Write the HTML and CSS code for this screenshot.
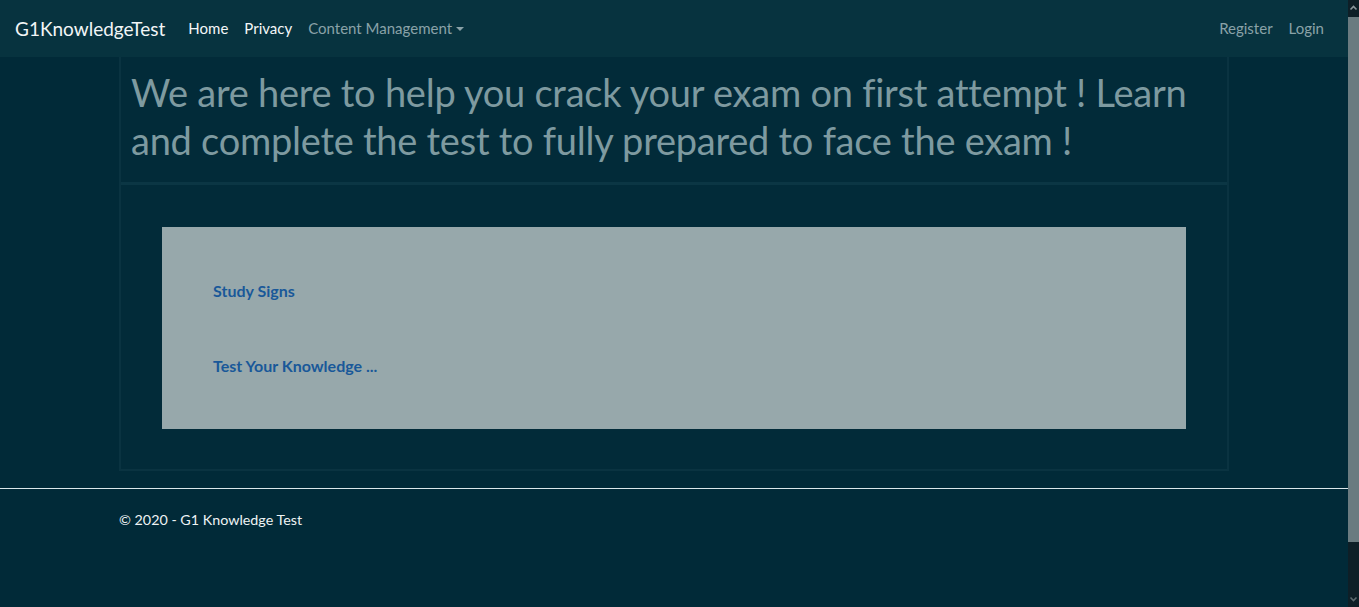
FILE: index.html
```html
<!DOCTYPE html>
<html lang="en">
<head>
<meta charset="utf-8">
<title>G1KnowledgeTest</title>
<link rel="stylesheet" href="styles.css">
</head>
<body>
<div class="page">
  <header class="navbar">
    <a class="brand" href="#">G1KnowledgeTest</a>
    <nav class="nav-left">
      <a class="nav-link active" href="#">Home</a>
      <a class="nav-link active" href="#">Privacy</a>
      <a class="nav-link muted dropdown" href="#">Content Management<span class="caret"></span></a>
    </nav>
    <nav class="nav-right">
      <a class="nav-link muted" href="#">Register</a>
      <a class="nav-link muted" href="#">Login</a>
    </nav>
  </header>
  <div class="container">
    <main class="main-box">
      <section class="hero">
        <h1 class="hero-title">We are here to help you crack your exam on first attempt ! Learn and complete the test to fully prepared to face the exam !</h1>
      </section>
      <section class="content">
        <div class="card">
          <a class="card-link" href="#">Study Signs</a>
          <a class="card-link" href="#">Test Your Knowledge ...</a>
        </div>
      </section>
    </main>
  </div>
  <footer class="footer">
    <div class="container footer-inner">© 2020 - G1 Knowledge Test</div>
  </footer>
</div>
<div class="scrollbar" aria-hidden="true">
  <div class="sb-arrow">
    <svg width="11" height="17" viewBox="0 0 11 17"><path d="M2.5 9.5 L5.5 6.5 L8.5 9.5" fill="none" stroke="#8a979c" stroke-width="1.6"/></svg>
  </div>
  <div class="sb-thumb"></div>
  <div class="sb-track"></div>
  <div class="sb-arrow">
    <svg width="11" height="17" viewBox="0 0 11 17"><path d="M2.5 7.5 L5.5 10.5 L8.5 7.5" fill="none" stroke="#5d6b70" stroke-width="1.6"/></svg>
  </div>
</div>
</body>
</html>
```
FILE: styles.css
```css
html {
  background: #012a38;
}
body {
  margin: 0;
  height: 607px;
  overflow: hidden;
  display: flex;
  background: #012a38;
  font-family: "Lato", "Open Sans", sans-serif;
  font-size: 16px;
  color: #e6eef0;
}
.page {
  flex: 1;
  min-width: 0;
}
a {
  text-decoration: none;
}
.navbar {
  display: flex;
  align-items: center;
  height: 57px;
  padding: 0 16px 1px 15px;
  box-sizing: border-box;
  background: #07333f;
}
.brand {
  font-size: 19px;
  color: #f2f6f7;
  margin-right: 15px;
}
.nav-left, .nav-right {
  display: flex;
  align-items: center;
}
.nav-right {
  margin-left: auto;
}
.nav-link {
  padding: 8px;
  font-size: 15px;
}
.nav-link.active {
  color: #f4f7f8;
}
.nav-link.muted {
  color: #8aa2a8;
}
.caret {
  display: inline-block;
  margin-left: 4px;
  vertical-align: 3px;
  border-top: 4px solid #8aa2a8;
  border-left: 4px solid transparent;
  border-right: 4px solid transparent;
}
.container {
  width: 1110px;
  margin: 0 auto;
}
.main-box {
  border: 2px solid #0a3341;
  border-top: none;
  background: #022b39;
}
.hero {
  padding: 11px 10px 18px;
  border-bottom: 3px solid #0b3644;
}
.hero-title {
  margin: 0;
  font-size: 38px;
  letter-spacing: -0.25px;
  font-weight: 400;
  line-height: 48px;
  color: #7e9aa0;
}
.content {
  padding: 42px 41px 40px 41px;
}
.card {
  display: flex;
  flex-direction: column;
  align-items: flex-start;
  gap: 55px;
  padding: 54px 51px 53px;
  background: #97a8ab;
}
.card-link {
  font-size: 16px;
  font-weight: 700;
  line-height: 20px;
  color: #195899;
}
.footer {
  margin-top: 17px;
  border-top: 1px solid #dbe7ea;
}
.footer-inner {
  line-height: 61px;
  font-size: 14.3px;
  color: #eef3f4;
}
.scrollbar {
  width: 11px;
  height: 607px;
  display: flex;
  flex-direction: column;
  background: #0e1f27;
}
.sb-arrow {
  height: 17px;
  flex: none;
}
.sb-arrow svg {
  display: block;
}
.sb-thumb {
  height: 525px;
  flex: none;
  background: #6a7b80;
}
.sb-track {
  flex: 1;
}
```
